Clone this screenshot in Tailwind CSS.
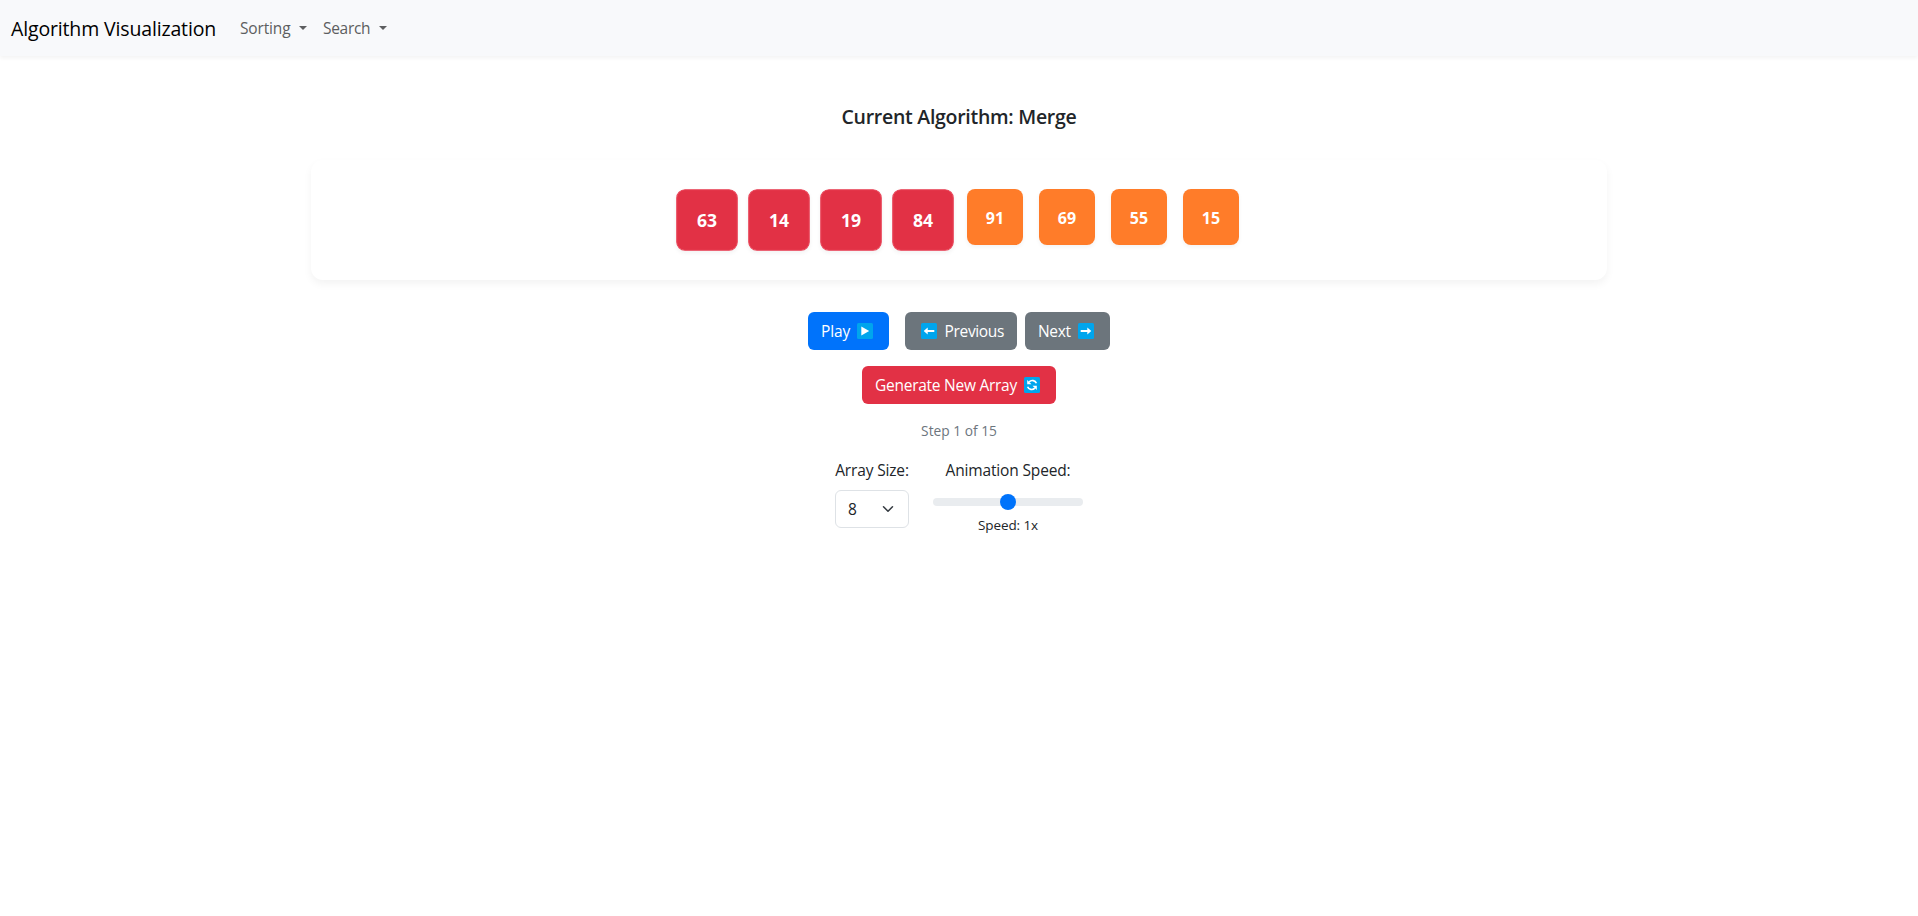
<!DOCTYPE html>
<html lang="en">
<head>
<meta charset="utf-8">
<title>Algorithm Visualization</title>
<script src="https://cdn.jsdelivr.net/npm/@tailwindcss/browser@4"></script>
</head>
<body class="min-h-screen bg-white font-['Open_Sans','Noto_Sans',sans-serif] text-[15.5px] leading-6 tracking-[-0.15px] text-[#212529]">
<nav class="flex h-14 items-center bg-[#f8f9fb] pl-[11px] shadow-[0_2px_4px_rgba(0,0,0,0.05)]">
  <a class="w-[205px] whitespace-nowrap pt-0.5 text-[19.5px] tracking-[-0.15px] text-black">Algorithm Visualization</a>
  <a class="ml-6 flex w-[67px] items-center justify-between text-[#5d5e60]">Sorting<i class="border-x-4 border-t-4 border-x-transparent border-t-current"></i></a>
  <a class="ml-4 flex w-[64px] items-center justify-between tracking-[-0.3px] text-[#5d5e60]">Search<i class="border-x-4 border-t-4 border-x-transparent border-t-current"></i></a>
</nav>
<main class="mx-auto flex w-[1296px] flex-col items-center">
  <h5 class="mt-[49px] text-[19.5px] font-semibold tracking-[-0.28px]">Current Algorithm: Merge</h5>
  <section class="mt-[31px] flex h-[120px] w-full justify-center gap-4 rounded-xl pt-[29px] text-base font-bold tracking-normal text-white shadow-[0_4px_8px_rgba(0,0,0,0.05)]">
    <div class="flex size-14 translate-y-[3px] scale-110 items-center justify-center rounded-lg border border-[#e9465a] bg-[#e23145] shadow-[0_2px_4px_rgba(0,0,0,0.05)]">63</div>
    <div class="flex size-14 translate-y-[3px] scale-110 items-center justify-center rounded-lg border border-[#e9465a] bg-[#e23145] shadow-[0_2px_4px_rgba(0,0,0,0.05)]">14</div>
    <div class="flex size-14 translate-y-[3px] scale-110 items-center justify-center rounded-lg border border-[#e9465a] bg-[#e23145] shadow-[0_2px_4px_rgba(0,0,0,0.05)]">19</div>
    <div class="flex size-14 translate-y-[3px] scale-110 items-center justify-center rounded-lg border border-[#e9465a] bg-[#e23145] shadow-[0_2px_4px_rgba(0,0,0,0.05)]">84</div>
    <div class="flex size-14 items-center justify-center rounded-lg bg-[#ff7c29] pt-px shadow-[0_2px_4px_rgba(0,0,0,0.05)]">91</div>
    <div class="flex size-14 items-center justify-center rounded-lg bg-[#ff7c29] pt-px shadow-[0_2px_4px_rgba(0,0,0,0.05)]">69</div>
    <div class="flex size-14 items-center justify-center rounded-lg bg-[#ff7c29] pt-px shadow-[0_2px_4px_rgba(0,0,0,0.05)]">55</div>
    <div class="flex size-14 items-center justify-center rounded-lg bg-[#ff7c29] pt-px shadow-[0_2px_4px_rgba(0,0,0,0.05)]">15</div>
  </section>
  <div class="mt-8 flex text-white">
    <button class="flex h-[38px] w-[81px] items-center justify-between rounded-md bg-[#0073fb] pl-[13px] pr-4">Play
      <svg class="size-4" viewBox="0 0 16 16"><rect width="16" height="16" rx="1.5" fill="#00a5ed"/><path d="M4.3 3.6v8.8L12.2 8z" fill="#fff"/></svg>
    </button>
    <button class="ml-4 flex h-[38px] w-28 items-center justify-between rounded-md bg-[#6c757c] pl-4 pr-[13px] tracking-[-0.35px]">
      <svg class="size-4" viewBox="0 0 16 16"><rect width="16" height="16" rx="1.5" fill="#00a5ed"/><path d="M2.7 8l4-3.6v2.5h6.6v2.2H6.7v2.5z" fill="#fff"/></svg>
      Previous</button>
    <button class="ml-2 flex h-[38px] w-[85px] items-center justify-between rounded-md bg-[#6c757c] pl-[13px] pr-4 tracking-[-0.35px]">Next
      <svg class="size-4" viewBox="0 0 16 16"><rect width="16" height="16" rx="1.5" fill="#00a5ed"/><path d="M13.3 8l-4-3.6v2.5H2.7v2.2h6.6v2.5z" fill="#fff"/></svg>
    </button>
  </div>
  <button class="mt-4 flex h-[38px] w-[194px] items-center justify-between rounded-md bg-[#e23145] pl-[13px] pr-4 tracking-[-0.26px] text-white">Generate New Array
    <svg class="size-4" viewBox="0 0 16 16"><rect width="16" height="16" rx="1.5" fill="#00a5ed"/><path d="M12.4 6.3A4.4 4.4 0 0 0 5.2 4.8M3.6 9.7a4.4 4.4 0 0 0 7.2 1.5" fill="none" stroke="#fff" stroke-width="1.7"/><path d="M3.2 3v4.3h4.3zM12.8 13V8.7H8.5z" fill="#fff"/></svg>
  </button>
  <p class="mt-[15px] text-[13.75px] tracking-normal text-[#6c757d]">Step 1 of 15</p>
  <div class="mt-[15px] flex gap-6">
    <div class="flex w-[74px] flex-col items-center">
      <label class="whitespace-nowrap">Array Size:</label>
      <div class="mt-2 flex h-[38px] w-full items-center justify-between rounded-md border border-[#dee2e6] px-3">8
        <svg class="mr-0.5 size-3" viewBox="0 0 16 16" fill="none" stroke="#343a40" stroke-width="2" stroke-linecap="round" stroke-linejoin="round"><path d="m2 5 6 6 6-6"/></svg>
      </div>
    </div>
    <div class="flex w-[150px] flex-col items-center">
      <label class="whitespace-nowrap">Animation Speed:</label>
      <div class="mt-2 flex h-6 w-full items-center justify-center">
        <div class="flex h-2 w-full items-center justify-center rounded-full bg-[#e9ecef]"><div class="size-4 shrink-0 rounded-full bg-[#0073fb]"></div></div>
      </div>
      <span class="mt-px text-[13.5px] leading-[21px] tracking-[-0.1px]">Speed: 1x</span>
    </div>
  </div>
</main>
</body>
</html>
